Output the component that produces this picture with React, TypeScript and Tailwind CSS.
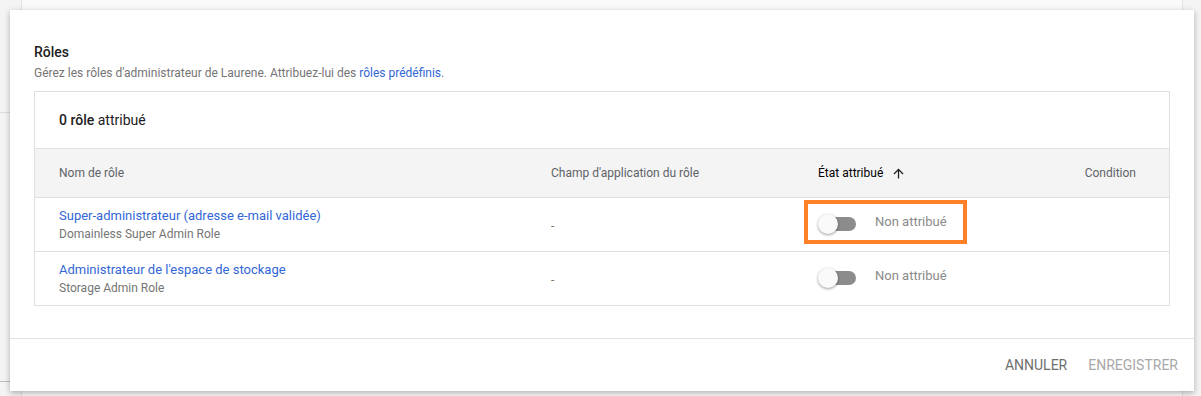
import React from "react";

function Toggle() {
  return (
    <div className="relative w-[38px] h-[20px] flex items-center">
      <div className="ml-[3px] w-[35px] h-[14px] rounded-full bg-[#8c8c8c]" />
      <div className="absolute left-0 top-0 w-[20px] h-[20px] rounded-full bg-[#fafafa] shadow-[0_1px_3px_rgba(0,0,0,0.4)]" />
    </div>
  );
}

function Row({ name, sub, highlight }: { name: string; sub: string; highlight?: boolean }) {
  return (
    <div className="relative flex h-[54px] border-t border-[#e0e0e0] items-center">
      {highlight && (
        <div className="absolute left-[769px] top-[2px] w-[163px] h-[44px] border-[4px] border-[#ff8127]" />
      )}
      <div className="w-[516px] pl-[24px] flex flex-col">
        <span className="text-[13px] leading-[18px] text-[#3367d6]">{name}</span>
        <span className="text-[12px] leading-[18px] text-[#757575]">{sub}</span>
      </div>
      <div className="w-[267px] text-[12px] text-[#757575] pt-[2px]">-</div>
      <div className="flex items-center gap-[19px] pb-[2px]">
        <Toggle />
        <span className="text-[13px] text-[#8a8a8a] mt-[-3px]">Non attribué</span>
      </div>
    </div>
  );
}

export default function App() {
  return (
    <div
      className="relative w-[1201px] h-[396px] overflow-hidden bg-[#f4f4f4]"
      style={{ fontFamily: "Roboto, 'Liberation Sans', sans-serif" }}
    >
      {/* background page */}
      <div className="absolute left-[21px] right-[18px] top-0 bottom-0 border-x border-[#e2e2e2] bg-[#fafafa]" />
      <div className="absolute left-0 w-[21px] top-[112px] h-px bg-[#dcdcdc]" />
      <div className="absolute left-0 w-[21px] top-[381px] h-px bg-[#bdbdbd]" />

      {/* dialog */}
      <div className="absolute left-[10px] top-[10px] w-[1184px] h-[381px] bg-white shadow-[0_2px_6px_rgba(0,0,0,0.3)] flex flex-col">
        <div className="px-[24px] pt-[34px] h-[328px]">
          <div className="text-[14px] leading-[16px] font-medium text-[#212121]">Rôles</div>
          <div className="mt-[5px] text-[12px] leading-[16px] text-[#757575]">
            Gérez les rôles d'administrateur de Laurene. Attribuez-lui des{" "}
            <span className="text-[#3367d6]">rôles prédéfinis</span>.
          </div>
          <div className="mt-[10px] w-[1136px] border border-[#e0e0e0]">
            <div className="h-[56px] flex items-center pl-[24px] text-[14px] text-[#212121]">
              <span className="font-medium">0 rôle</span>&nbsp;attribué
            </div>
            <div className="h-[49px] flex items-center bg-[#f4f4f4] border-t border-[#e0e0e0] text-[12px] text-[#5f6368]">
              <div className="w-[516px] pl-[24px]">Nom de rôle</div>
              <div className="w-[267px]">Champ d'application du rôle</div>
              <div className="flex items-center text-[#000000] gap-[8px]">
                <span>État attribué</span>
                <svg width="15" height="15" viewBox="0 0 24 24">
                  <path d="M4 12l1.41 1.41L11 7.83V20h2V7.83l5.58 5.59L20 12l-8-8-8 8z" fill="#202020" />
                </svg>
              </div>
              <div className="flex-1 text-right pr-[33px]">Condition</div>
            </div>
            <Row name="Super-administrateur (adresse e-mail validée)" sub="Domainless Super Admin Role" highlight />
            <Row name="Administrateur de l'espace de stockage" sub="Storage Admin Role" />
          </div>
        </div>
        <div className="border-t border-[#e0e0e0] flex-1 flex items-center justify-end pr-[16px] gap-[21px] text-[14px] pt-[1px]">
          <span className="text-[#6e6e6e]">ANNULER</span>
          <span className="text-[#a8a8a8]">ENREGISTRER</span>
        </div>
      </div>
    </div>
  );
}
